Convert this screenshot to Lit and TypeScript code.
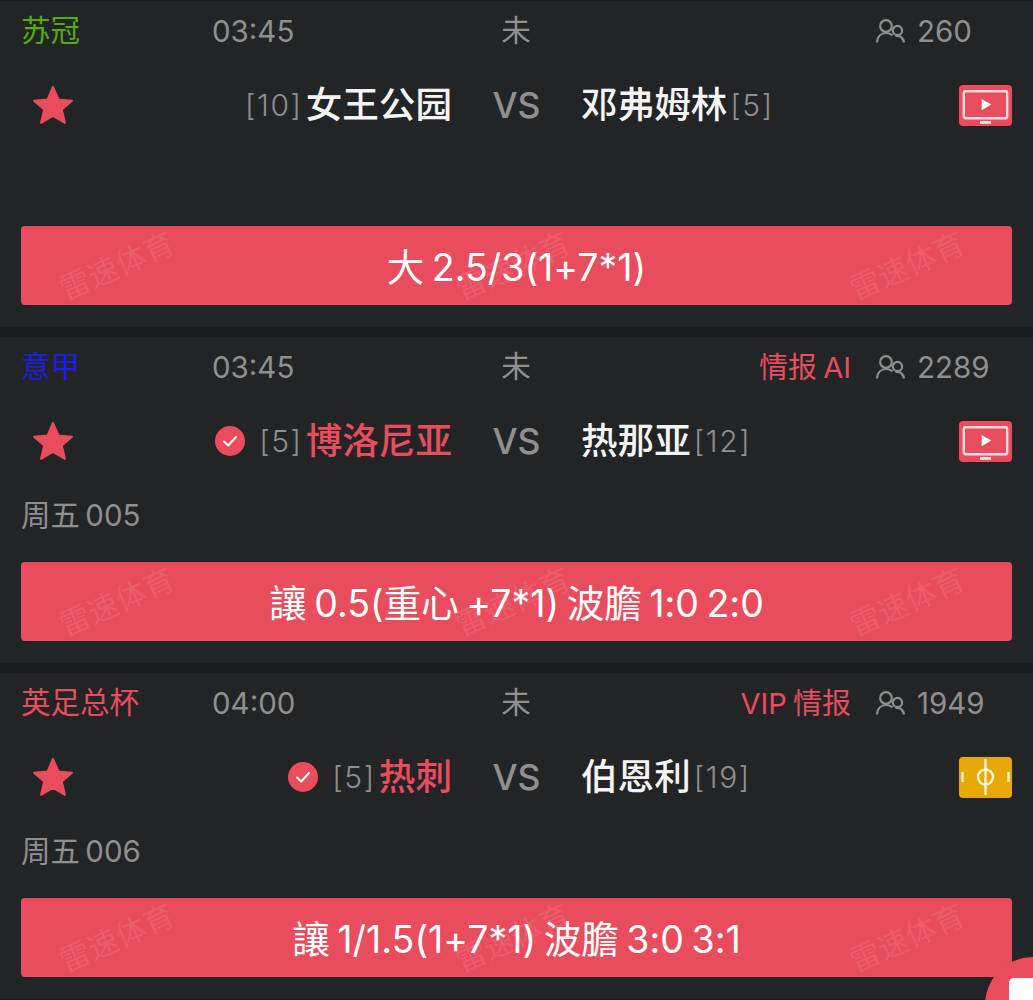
import { LitElement, css, html } from 'lit';
import { customElement } from 'lit/decorators.js';

type Match = {
  league: string;
  leagueColor: string;
  time: string;
  tag: string;
  count: string;
  home: string;
  homeRank: string;
  homeWin: boolean;
  away: string;
  awayRank: string;
  code: string;
  tip: string;
  icon: 'tv' | 'pitch';
};

const matches: Match[] = [
  {
    league: '苏冠',
    leagueColor: '#52ad0f',
    time: '03:45',
    tag: '',
    count: '260',
    home: '女王公园',
    homeRank: '[10]',
    homeWin: false,
    away: '邓弗姆林',
    awayRank: '[5]',
    code: '',
    tip: '大 2.5/3(1+7*1)',
    icon: 'tv',
  },
  {
    league: '意甲',
    leagueColor: '#1b1fe6',
    time: '03:45',
    tag: '情报 AI',
    count: '2289',
    home: '博洛尼亚',
    homeRank: '[5]',
    homeWin: true,
    away: '热那亚',
    awayRank: '[12]',
    code: '周五 005',
    tip: '讓 0.5(重心 +7*1) 波膽 1:0 2:0',
    icon: 'tv',
  },
  {
    league: '英足总杯',
    leagueColor: '#e84c5d',
    time: '04:00',
    tag: 'VIP 情报',
    count: '1949',
    home: '热刺',
    homeRank: '[5]',
    homeWin: true,
    away: '伯恩利',
    awayRank: '[19]',
    code: '周五 006',
    tip: '讓 1/1.5(1+7*1) 波膽 3:0 3:1',
    icon: 'pitch',
  },
];

const star = html`<svg class="star" viewBox="0 0 40 40">
  <path
    fill="#e84c5d"
    stroke="#e84c5d"
    stroke-width="2"
    stroke-linejoin="round"
    d="M20 2l5.5 12.4 13.5 1.3-10.2 8.9 3.1 13.2L20 30.900 8.100 37.800l3.100-13.200L1 15.700l13.500-1.300z"
  />
</svg>`;

const users = html`<svg class="users" viewBox="0 0 29 24" fill="none" stroke="#8f8f8f" stroke-width="2.200">
  <circle cx="10" cy="7" r="5.800" />
  <path d="M1 23.500c.4-5.800 4-9.500 9-9.500 2.800 0 5 .9 6.500 2.400" />
  <circle cx="21.500" cy="11.500" r="4.600" />
  <path d="M19.500 17c4.500-.8 7.800 1.700 8.500 6.500" />
</svg>`;

const tv = html`<svg class="feed" viewBox="0 0 53 41">
  <rect width="53" height="41" rx="4" fill="#e84c5d" />
  <rect x="4.800" y="6.200" width="43.400" height="27" rx="2" fill="none" stroke="#fbdde1" stroke-width="2.400" />
  <path d="M22.700 14l9.500 5.600-9.500 5.600z" fill="#fff" />
  <rect x="21" y="36" width="11" height="2.800" fill="#fbdde1" />
</svg>`;

const pitch = html`<svg class="feed" viewBox="0 0 53 41">
  <rect width="53" height="41" rx="4" fill="#e8a808" />
  <path d="M26.500 2v36" stroke="#fff3cf" stroke-width="2.400" />
  <circle cx="26.500" cy="20" r="7.500" fill="none" stroke="#fff3cf" stroke-width="2.400" />
  <path d="M3.500 15v10M49.500 15v10" stroke="#fff3cf" stroke-width="2.400" />
</svg>`;

const check = html`<svg class="check" viewBox="0 0 30 30">
  <circle cx="15" cy="15" r="15" fill="#e84c5d" />
  <path d="M9 15.500l4.200 4L21 11" fill="none" stroke="#fff" stroke-width="2" stroke-linecap="round" stroke-linejoin="round" />
</svg>`;

@customElement('app-root')
export class AppRoot extends LitElement {
  static styles = css`
    :host {
      display: block;
      height: 1000px;
      overflow: hidden;
      position: relative;
      padding-top: 1px;
      box-sizing: border-box;
      background: #1a1b1d;
      font-family: 'Inter', 'Noto Sans CJK SC', sans-serif;
    }

    .card {
      height: 326px;
      margin-bottom: 10px;
      padding: 0 21px;
      box-sizing: border-box;
      background: #232426;
      display: flex;
      flex-direction: column;
    }

    .head {
      display: grid;
      grid-template-columns: 191px 274px 60px 305px 1fr;
      align-items: center;
      height: 60px;
      font-size: 29.500px;
      color: #8f8f8f;
    }

    .league {
      margin-bottom: 6px;
      white-space: nowrap;
    }

    .status {
      text-align: center;
      margin-bottom: 6px;
    }

    .tag {
      text-align: right;
      font-size: 29px;
      word-spacing: -2px;
      color: #e84c5d;
      margin-bottom: 5px;
      white-space: nowrap;
    }

    .count {
      display: flex;
      align-items: center;
      gap: 12px;
      padding-left: 25px;
    }

    .users {
      width: 29px;
      height: 24px;
    }

    .teams {
      display: grid;
      grid-template-columns: 431px 129px 378px 53px;
      align-items: center;
      height: 88px;
    }

    .home,
    .away {
      display: flex;
      align-items: center;
      white-space: nowrap;
    }

    .home {
      justify-content: flex-end;
    }

    .star {
      width: 40px;
      height: 40px;
      margin-left: 12px;
      margin-right: auto;
    }

    .check {
      width: 30px;
      height: 30px;
      margin-right: 14px;
    }

    .name {
      font-size: 36.600px;
      line-height: 1;
      font-weight: 500;
      color: #f4f4f4;
    }

    .name.win {
      color: #e84c5d;
    }

    .rank {
      font-size: 30px;
      font-weight: 300;
      letter-spacing: 1.600px;
      color: #8f8f8f;
    }

    .home .rank {
      margin-right: 3px;
    }

    .away .rank {
      margin-left: 3px;
    }

    .vs {
      text-align: center;
      font-size: 35.500px;
      font-weight: 500;
      color: #8f8f8f;
    }

    .feed {
      display: block;
      width: 53px;
      height: 41px;
    }

    .code {
      height: 77px;
      padding-top: 7px;
      box-sizing: border-box;
      font-size: 29.500px;
      word-spacing: -3px;
      color: #8f8f8f;
    }

    .tip {
      position: relative;
      height: 79px;
      padding-bottom: 3px;
      box-sizing: border-box;
      border-radius: 4px;
      background: #e84c5d;
      color: #fff;
      font-size: 37.500px;
      word-spacing: -3px;
      font-feature-settings: 'calt' 0;
      display: flex;
      align-items: center;
      justify-content: center;
      white-space: nowrap;
    }

    .mark {
      position: absolute;
      top: 25px;
      font-size: 30.500px;
      line-height: 30px;
      word-spacing: 0;
      color: rgba(255, 255, 255, 0.1);
      transform: rotate(-24deg);
      pointer-events: none;
    }

    .fab {
      position: absolute;
      left: 985px;
      top: 957px;
      width: 96px;
      height: 96px;
      border-radius: 50%;
      background: #e84c5d;
    }

    .fab i {
      position: absolute;
      left: 24px;
      top: 21px;
      width: 50px;
      height: 50px;
      border-radius: 5px;
      background: #fff;
    }
  `;

  renderCard(m: Match) {
    return html`
      <section class="card">
        <div class="head">
          <span class="league" style="color:${m.leagueColor}">${m.league}</span>
          <span>${m.time}</span>
          <span class="status">未</span>
          <span class="tag">${m.tag}</span>
          <span class="count">${users}${m.count}</span>
        </div>
        <div class="teams">
          <div class="home">
            ${star} ${m.homeWin ? check : ''}
            <span class="rank">${m.homeRank}</span>
            <span class="name ${m.homeWin ? 'win' : ''}">${m.home}</span>
          </div>
          <div class="vs">VS</div>
          <div class="away">
            <span class="name">${m.away}</span>
            <span class="rank">${m.awayRank}</span>
          </div>
          ${m.icon === 'tv' ? tv : pitch}
        </div>
        <div class="code">${m.code}</div>
        <div class="tip">
          ${m.tip}
          <span class="mark" style="left:35px">雷速体育</span>
          <span class="mark" style="left:431px">雷速体育</span>
          <span class="mark" style="left:825px">雷速体育</span>
        </div>
      </section>
    `;
  }

  render() {
    return html`${matches.map((m) => this.renderCard(m))}
      <div class="fab"><i></i></div>`;
  }
}
